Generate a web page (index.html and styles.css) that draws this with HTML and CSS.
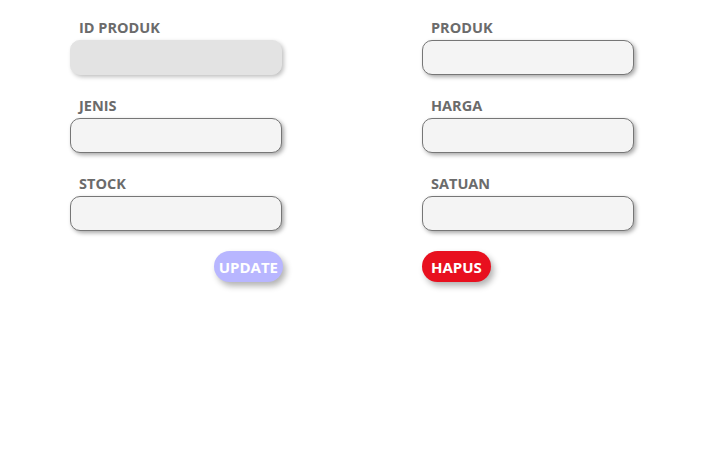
FILE: index.html
```html
<!DOCTYPE html>
<html>
<head>
<meta charset="utf-8">
<link rel="stylesheet" href="styles.css">
</head>
<body>
<form class="form">
  <div class="col">
    <div class="field">
      <label class="label">ID PRODUK</label>
      <input class="input input-disabled" disabled>
    </div>
    <div class="field">
      <label class="label">JENIS</label>
      <input class="input">
    </div>
    <div class="field">
      <label class="label">STOCK</label>
      <input class="input">
    </div>
    <div class="actions actions-right">
      <button type="button" class="btn btn-update">UPDATE</button>
    </div>
  </div>
  <div class="col">
    <div class="field">
      <label class="label">PRODUK</label>
      <input class="input">
    </div>
    <div class="field">
      <label class="label">HARGA</label>
      <input class="input">
    </div>
    <div class="field">
      <label class="label">SATUAN</label>
      <input class="input">
    </div>
    <div class="actions">
      <button type="button" class="btn btn-hapus">HAPUS</button>
    </div>
  </div>
</form>
</body>
</html>
```

FILE: styles.css
```css
html, body {
  margin: 0;
  padding: 0;
  background: #ffffff;
}
body {
  font-family: "Open Sans", "Liberation Sans", sans-serif;
  min-height: 459px;
}
.form {
  display: flex;
  gap: 140px;
  padding: 18px 0 40px 70px;
}
.col {
  width: 212px;
  display: flex;
  flex-direction: column;
  gap: 21px;
}
.field {
  display: flex;
  flex-direction: column;
  gap: 2px;
}
.label {
  font-size: 14.5px;
  font-weight: 700;
  line-height: 20px;
  color: #6b6b6b;
  padding-left: 9px;
}
.input {
  box-sizing: border-box;
  width: 212px;
  height: 35px;
  margin: 0;
  border: 1px solid #767676;
  border-radius: 10px;
  background: #f4f4f4;
  box-shadow: 2px 2px 4px rgba(0, 0, 0, 0.35);
  outline: none;
}
.input-disabled {
  border-color: #e3e3e3;
  background: #e3e3e3;
  box-shadow: 2px 2px 4px rgba(0, 0, 0, 0.25);
}
.actions {
  display: flex;
  margin-top: -1px;
}
.actions-right {
  justify-content: flex-end;
  margin-right: -1px;
}
.btn {
  height: 31px;
  border: none;
  border-radius: 16px;
  font-family: "Open Sans", "Liberation Sans", sans-serif;
  font-size: 15px;
  font-weight: 700;
  color: #ffffff;
  box-shadow: 3px 4px 6px rgba(0, 0, 0, 0.3);
}
.btn-update {
  padding: 0 5px;
  background: #b8b6ff;
}
.btn-hapus {
  padding: 0 9px;
  background: #e8101f;
}
```
